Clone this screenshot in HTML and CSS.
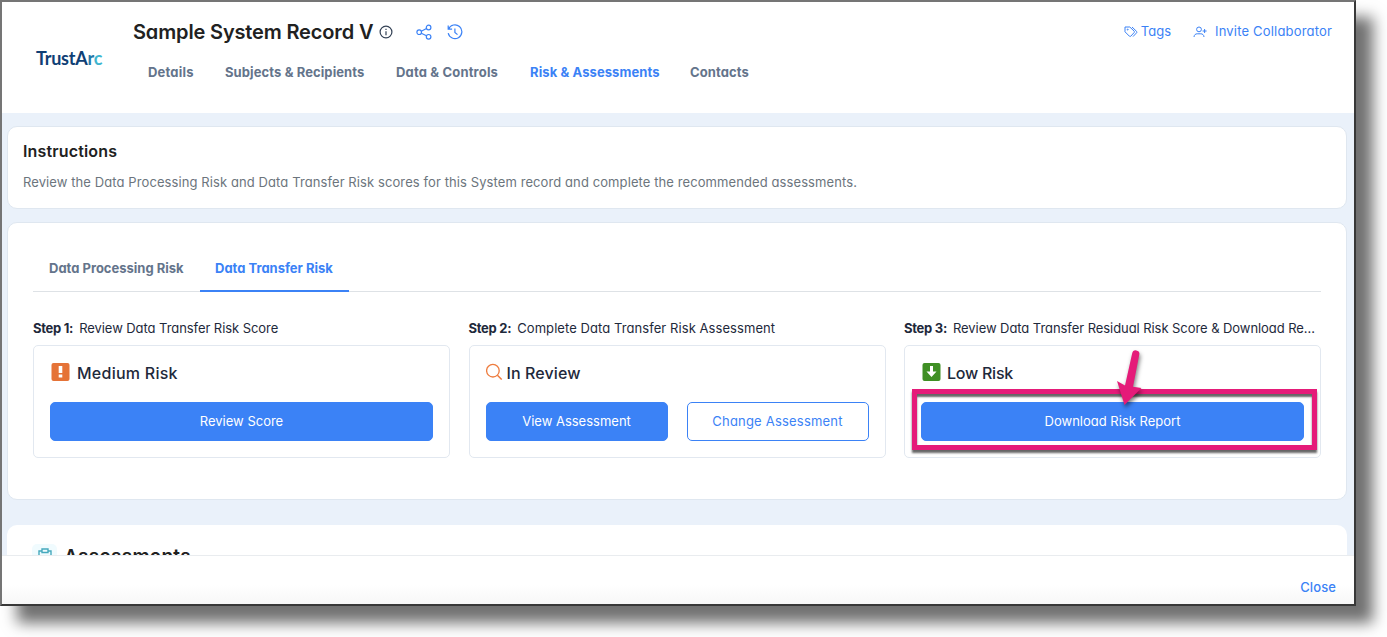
FILE: index.html
```html
<!DOCTYPE html>
<html lang="en">

<head>
    <meta charset="UTF-8">
    <meta name="viewport" content="width=device-width, initial-scale=1.0">
    <title>Sample System Record V</title>
    <link rel="stylesheet" href="styles.css">
</head>

<body>

    <div class="window">
        <header class="header">
            <div class="logo">TrustA<span class="logo-r">r</span><span class="logo-c">c</span></div>

            <div class="header-main">
                <div class="title-row">
                    <h1>Sample System Record V</h1>
                    <svg class="icon-info" width="14" height="14" viewBox="0 0 14 14">
                        <circle cx="7" cy="7" r="5.9" />
                        <path d="M7 6.2v4M7 3.7v1.2" />
                    </svg>
                    <svg class="icon-share" width="16" height="16" viewBox="0 0 16 16">
                        <circle cx="3.2" cy="8.2" r="2.3" />
                        <circle cx="12.6" cy="3.5" r="2.3" />
                        <circle cx="12.6" cy="12.8" r="2.3" />
                        <path d="M5.3 7.2l5.2-2.7M5.3 9.2l5.2 2.6" />
                    </svg>
                    <svg class="icon-history" width="16" height="16" viewBox="0 0 16 16">
                        <path d="M1.200 1.400v3.800h3.900M1.600 5A6.900 6.900 0 1 1 1.200 9.200M7.900 4.400v4l2.600 2.200" />
                    </svg>
                </div>
                <nav class="nav">
                    <a class="nav-details">Details</a>
                    <a class="nav-subjects">Subjects &amp; Recipients</a>
                    <a class="nav-data">Data &amp; Controls</a>
                    <a class="nav-risk active">Risk &amp; Assessments</a>
                    <a class="nav-contacts">Contacts</a>
                </nav>
            </div>

            <div class="actions">
                <a class="action tags">
                    <svg width="14" height="12" viewBox="0 0 14 12">
                        <path d="M1 1h4.800l4.400 4.200a1 1 0 0 1 0 1.300L6.800 10.200a1 1 0 0 1-1.400 0L1 5.800zM8 1l4.600 4.400a1 1 0 0 1 0 1.400L9 10.600" />
                        <circle cx="3.700" cy="3.600" r=".5" />
                    </svg>
                    <span>Tags</span>
                </a>
                <a class="action invite">
                    <svg width="14" height="12" viewBox="0 0 14 12">
                        <circle cx="6" cy="3.400" r="2.400" />
                        <path d="M1 11c.2-2.300 1.600-3.200 3.200-3.200h3.600c1.600 0 3 .9 3.200 3.200M9.600 5h4M11.600 3v4" />
                    </svg>
                    <span>Invite Collaborator</span>
                </a>
            </div>
        </header>

        <main class="content">
            <section class="card instructions">
                <h2>Instructions</h2>
                <p>Review the Data Processing Risk and Data Transfer Risk scores for this System record and complete the recommended assessments.</p>
            </section>

            <section class="card risk">
                <div class="tabs">
                    <a class="tab tab-processing">Data Processing Risk</a>
                    <a class="tab tab-transfer active">Data Transfer Risk</a>
                </div>

                <div class="steps">
                    <div class="step">
                        <div class="step-label"><b>Step 1:</b><span>Review Data Transfer Risk Score</span></div>
                        <div class="box">
                            <div class="status medium">
                                <svg width="20" height="18" viewBox="0 0 20 18">
                                    <rect x="1.5" width="18" height="18" rx="2" fill="#e57337" />
                                    <path d="M8.700 3h3.600v7H8.700zM8.700 11.500h3.600v3H8.700z" fill="#fff" />
                                </svg>
                                <span>Medium Risk</span>
                            </div>
                            <div class="buttons">
                                <button>Review Score</button>
                            </div>
                        </div>
                    </div>

                    <div class="step">
                        <div class="step-label wide"><b>Step 2:</b><span>Complete Data Transfer Risk Assessment</span></div>
                        <div class="box">
                            <div class="status review">
                                <svg width="18" height="18" viewBox="0 0 18 18">
                                    <path d="M11.400 12.200l4.300 4.300" stroke="#ee7c3e" stroke-width="1.500" fill="none" />
                                    <circle cx="6.900" cy="7.700" r="6.300" stroke="#ee7c3e" stroke-width="1.300" fill="none" />
                                </svg>
                                <span>In Review</span>
                            </div>
                            <div class="buttons">
                                <button>View Assessment</button>
                                <button class="outline">Change Assessment</button>
                            </div>
                        </div>
                    </div>

                    <div class="step">
                        <div class="step-label"><b>Step 3:</b><span>Review Data Transfer Residual Risk Score &amp; Download Re…</span></div>
                        <div class="box">
                            <div class="status low">
                                <svg width="20" height="18" viewBox="0 0 20 18">
                                    <rect x="1.500" width="18" height="18" rx="2" fill="#3f8f24" />
                                    <path d="M9 3h3v5.500h3.500L10.500 14 5.500 8.500H9z" fill="#fff" />
                                </svg>
                                <span>Low Risk</span>
                            </div>
                            <div class="buttons">
                                <button>Download Risk Report</button>
                            </div>
                            <div class="highlight"></div>
                            <svg class="arrow" width="40" height="70" viewBox="0 0 40 70">
                                <path d="M25.200 7.300a3.600 3.600 0 0 1 7.100 1.300L26 40.700l8.500 1.300L17.500 59 10 35l8 4.500z" />
                            </svg>
                        </div>
                    </div>
                </div>
            </section>

            <section class="assessments">
                <div class="clip-icon">
                    <svg width="14" height="16" viewBox="0 0 14 16">
                        <path d="M3.500 3H1v12h12V3h-2.500M4 1h6v3.500H4z" />
                    </svg>
                </div>
                <h2>Assessments</h2>
            </section>
        </main>

        <footer class="footer">
            <a class="close">Close</a>
        </footer>
    </div>

</body>

</html>
```
FILE: styles.css
```css
* {
    margin: 0;
    padding: 0;
    box-sizing: border-box;
}

body {
    width: 1387px;
    height: 637px;
    overflow: hidden;
    background: #fff;
    font-family: Inter, "Open Sans", sans-serif;
    font-feature-settings: "cv11";
    font-size: 13px;
    color: #1e293b;
}

.window {
    width: 1356px;
    height: 606px;
    display: flex;
    flex-direction: column;
    border: 2px solid #757575;
    border-right-color: #383838;
    border-bottom-color: #383838;
    box-shadow: 17px 17px 14px rgba(0, 0, 0, 0.56);
}

/* header */
.header {
    height: 111px;
    flex: none;
    display: flex;
    background: #fff;
}
.logo {
    width: 131px;
    padding: 45px 0 0 34px;
    font: 700 18px/22px Lato, sans-serif;
    letter-spacing: -0.25px;
    color: #0f3f75;
    white-space: nowrap;
}
.logo-r {
    color: #2379a8;
}
.logo-c {
    color: #3fb5cf;
}
.header-main {
    flex: 1;
}
.title-row {
    display: flex;
    align-items: center;
    height: 30px;
    margin-top: 15px;
}
h1 {
    width: 246px;
    font-size: 20px;
    line-height: 28px;
    font-weight: 600;
    letter-spacing: -0.15px;
    color: #212121;
    white-space: nowrap;
}
.title-row svg {
    fill: none;
    stroke: #3b82f6;
    stroke-width: 1.2;
}
.title-row .icon-info {
    stroke: #334155;
}
.icon-share {
    margin-left: 23px;
}
.icon-history {
    margin-left: 15px;
}
.nav {
    display: flex;
    margin: 14px 0 0 15px;
    line-height: 22px;
    font-weight: 700;
    letter-spacing: 0.1px;
    color: #64748b;
    white-space: nowrap;
}
.nav-details {
    width: 77px;
    letter-spacing: 0.2px;
}
.nav-subjects {
    width: 171px;
}
.nav-data {
    width: 134px;
    letter-spacing: 0.17px;
}
.nav-risk {
    width: 160px;
}
.active {
    color: #3b82f6;
}
.actions {
    display: flex;
    padding: 19px 22px 0 0;
    gap: 22px;
    color: #3b82f6;
    line-height: 22px;
}
.action {
    display: flex;
    align-items: center;
    height: 22px;
    white-space: nowrap;
}
.action svg {
    fill: none;
    stroke: #3b82f6;
}
.action span {
    line-height: 20px;
    margin-bottom: 2px;
}
.tags {
    gap: 3px;
}
.invite {
    gap: 8px;
    letter-spacing: 0.18px;
}

/* content */
.content {
    flex: 1;
    min-height: 0;
    overflow: hidden;
    padding: 13px 7px 0 5px;
    background: #eaf1fa;
}
.card {
    background: #fff;
    border: 1px solid #dfe7f0;
    border-radius: 10px;
}
.instructions {
    height: 83px;
    padding: 12px 15px;
}
.instructions h2 {
    font-size: 16px;
    line-height: 24px;
    font-weight: 600;
    letter-spacing: 0.15px;
    color: #212121;
}
.instructions p {
    margin-top: 8px;
    line-height: 22px;
    letter-spacing: 0.093px;
    color: #6c757d;
    white-space: nowrap;
}
.risk {
    height: 278px;
    margin-top: 13px;
    padding: 23px 25px 0;
}
.tabs {
    display: flex;
    height: 46px;
    border-bottom: 1px solid #dee2e6;
    font-weight: 700;
    color: #64748b;
}
.tab {
    height: 46px;
    line-height: 44px;
    padding-left: 16px;
    white-space: nowrap;
}
.tab-processing {
    width: 167px;
}
.tab-transfer {
    width: 149px;
    padding-left: 15px;
    border-bottom: 2px solid #3b82f6;
}
.tab.active {
    color: #3b82f6;
}
.steps {
    display: grid;
    grid-template-columns: repeat(3, 417px);
    justify-content: space-between;
    margin-top: 24px;
}
.step-label {
    display: flex;
    height: 29px;
    line-height: 24px;
    letter-spacing: -0.066px;
    white-space: nowrap;
}
.step-label b {
    margin-right: 6px;
    letter-spacing: -0.28px;
}
.step-label.wide {
    letter-spacing: 0.07px;
}
.box {
    position: relative;
    height: 113px;
    padding: 17px 16px 0;
    border: 1px solid #e2e8f0;
    border-radius: 5px;
}
.status {
    display: flex;
    height: 20px;
    gap: 6px;
    font-size: 16px;
    line-height: 20px;
    font-weight: 500;
}
.medium {
    gap: 7px;
    letter-spacing: 0.25px;
}
.review {
    gap: 3px;
    letter-spacing: 0.1px;
}
.low {
    letter-spacing: -0.25px;
}
.buttons {
    display: flex;
    gap: 19px;
    margin-top: 19px;
}
button {
    flex: 1;
    height: 39px;
    padding-bottom: 2px;
    border: 1px solid #3b82f6;
    border-radius: 5px;
    background: #3b82f6;
    color: #fff;
    font: inherit;
    font-feature-settings: inherit;
}
button.outline {
    background: #fff;
    color: #3b82f6;
    letter-spacing: 0.2px;
}
.highlight {
    position: absolute;
    left: 7px;
    top: 43px;
    width: 405px;
    height: 61px;
    border: 5px solid #e51b79;
    box-shadow: 0 3px 2px rgba(0, 0, 0, 0.6), inset 0 3px 2px rgba(0, 0, 0, 0.6);
}
.arrow {
    position: absolute;
    left: 202px;
    top: 0;
    fill: #e51b79;
    filter: drop-shadow(1px 3px 2px rgba(0, 0, 0, 0.5));
}
.assessments {
    display: flex;
    height: 80px;
    margin-top: 25px;
    padding: 19px 25px;
    border-radius: 10px;
    background: #fff;
}
.clip-icon {
    width: 25px;
    height: 25px;
    padding: 4px 6px;
    border-radius: 5px;
    background: #f0fbfe;
}
.clip-icon svg {
    fill: none;
    stroke: #46a9bd;
    stroke-width: 1.4;
}
.assessments h2 {
    margin-left: 7px;
    font-size: 19px;
    line-height: 25px;
    font-weight: 600;
    letter-spacing: 0.3px;
    color: #212121;
}

/* footer */
.footer {
    height: 49px;
    flex: none;
    padding: 20px 18px 0 0;
    border-top: 1px solid #e9ecef;
    background: linear-gradient(#fff 60%, #f7f7f7);
    text-align: right;
    line-height: 22px;
    font-weight: 500;
    letter-spacing: 0.1px;
    color: #3b82f6;
}
```
